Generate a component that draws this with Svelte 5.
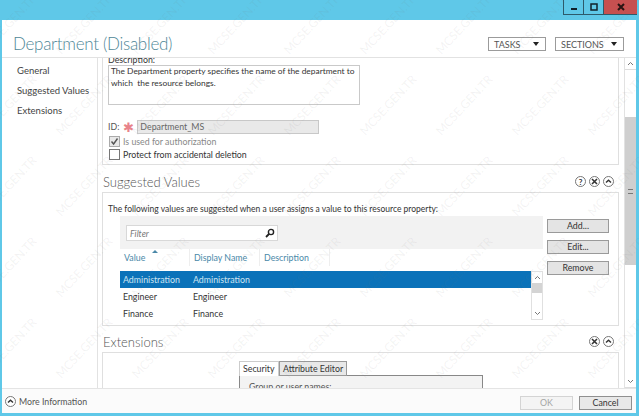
<script>
  const marks = [];
  for (let r = 0; r < 5; r++) {
    for (let c = -1; c < 8; c++) marks.push({ x: 84 + c * 76, y: 24 + r * 81 });
  }
  const rows = ['Administration', 'Engineer', 'Finance'];
</script>

<div class="window">
  <div class="titlebar">
    <div class="controls">
      <div class="ctl"><svg width="8" height="8" viewBox="0 0 8 8"><rect x="1" y="5" width="6" height="2" fill="#10212b" /></svg></div>
      <div class="ctl"><svg width="8" height="8" viewBox="0 0 8 8"><rect x="1" y="1" width="6" height="6" fill="none" stroke="#10212b" stroke-width="1.5" /></svg></div>
      <div class="ctl close"><svg width="8" height="8" viewBox="0 0 8 8"><path d="M1 1L7 7M7 1L1 7" stroke="#2a1413" stroke-width="2" /></svg></div>
    </div>
  </div>
  <div class="client">
    <header>
      <h1>Department (Disabled)</h1>
      <div class="menu tasks"><span>TASKS</span><i></i></div>
      <div class="menu sections"><span>SECTIONS</span><i></i></div>
    </header>
    <div class="body">
      <nav>
        <div>General</div>
        <div>Suggested Values</div>
        <div>Extensions</div>
      </nav>
      <main>
        <div class="scroll">
          <section class="panel general">
            <div class="desc-label">Description:</div>
            <div class="textarea">The Department property specifies the name of the department to which&nbsp; the resource belongs.</div>
            <div class="id-row">
              <span>ID:</span>
              <span class="star">✱</span>
              <div class="id-input">Department_MS</div>
            </div>
            <div class="check disabled"><span class="box"><svg width="9" height="9" viewBox="0 0 9 9"><path d="M1.5 4.5L3.6 7L7.5 1.5" fill="none" stroke="#555" stroke-width="1.4" /></svg></span>Is used for authorization</div>
            <div class="check"><span class="box"></span>Protect from accidental deletion</div>
          </section>

          <div class="sec-head">
            <h2>Suggested Values</h2>
            <span class="round help">?</span>
            <span class="round"><svg width="7" height="7" viewBox="0 0 7 7"><path d="M1 1L6 6M6 1L1 6" stroke="#333" stroke-width="1.6" /></svg></span>
            <span class="round"><svg width="7" height="7" viewBox="0 0 7 7"><path d="M1 4.6L3.5 2.2L6 4.6" fill="none" stroke="#333" stroke-width="1.4" /></svg></span>
          </div>
          <section class="panel values">
            <p>The following values are suggested when a user assigns a value to this resource property:</p>
            <div class="values-row">
              <div class="grid">
                <div class="filter-band">
                  <div class="filter">
                    <span>Filter</span>
                    <svg width="10" height="10" viewBox="0 0 10 10"><circle cx="6" cy="4" r="2.6" fill="none" stroke="#222" stroke-width="1.4" /><path d="M4 6L1 9" stroke="#222" stroke-width="1.8" /></svg>
                  </div>
                </div>
                <div class="columns">
                  <div class="col c1"><b class="sort"></b>Value</div>
                  <div class="col c2">Display Name</div>
                  <div class="col c3">Description</div>
                </div>
                <div class="list">
                  <div class="rows">
                    {#each rows as row, i}
                      <div class="row" class:selected={i === 0}><span class="c1">{row}</span><span>{row}</span></div>
                    {/each}
                  </div>
                  <div class="list-bar">
                    <span class="arrow"><svg width="7" height="5" viewBox="0 0 7 5"><path d="M1 4L3.5 1.5L6 4" fill="none" stroke="#777" /></svg></span>
                    <span class="list-thumb"></span>
                    <span class="grow"></span>
                    <span class="arrow"><svg width="7" height="5" viewBox="0 0 7 5"><path d="M1 1L3.5 3.5L6 1" fill="none" stroke="#777" /></svg></span>
                  </div>
                </div>
              </div>
              <div class="side">
                <div class="btn">Add...</div>
                <div class="btn">Edit...</div>
                <div class="btn">Remove</div>
              </div>
            </div>
          </section>

          <div class="sec-head ext">
            <h2>Extensions</h2>
            <span class="round"><svg width="7" height="7" viewBox="0 0 7 7"><path d="M1 1L6 6M6 1L1 6" stroke="#333" stroke-width="1.6" /></svg></span>
            <span class="round"><svg width="7" height="7" viewBox="0 0 7 7"><path d="M1 4.6L3.5 2.2L6 4.6" fill="none" stroke="#333" stroke-width="1.4" /></svg></span>
          </div>
          <section class="panel extensions">
            <div class="tabs">
              <div class="tab active">Security</div>
              <div class="tab">Attribute Editor</div>
            </div>
            <div class="tab-body">Group or user names:</div>
          </section>
        </div>
        <div class="scrollbar">
          <span class="sb-arrow"><svg width="7" height="5" viewBox="0 0 7 5"><path d="M1 4L3.5 1.5L6 4" fill="none" stroke="#777" /></svg></span>
          <span class="sb-space"></span>
          <span class="sb-thumb"><i></i></span>
          <span class="grow"></span>
          <span class="sb-arrow"><svg width="7" height="5" viewBox="0 0 7 5"><path d="M1 1L3.5 3.5L6 1" fill="none" stroke="#777" /></svg></span>
        </div>
      </main>
    </div>
    <footer>
      <span class="round"><svg width="7" height="7" viewBox="0 0 7 7"><path d="M1 4.6L3.5 2.2L6 4.6" fill="none" stroke="#333" stroke-width="1.4" /></svg></span>
      <span class="more">More Information</span>
      <div class="fbtn off">OK</div>
      <div class="fbtn">Cancel</div>
    </footer>
  </div>
  <div class="marks" aria-hidden="true">
    {#each marks as m}
      <span style="left:{m.x}px;top:{m.y}px">MCSE.GEN.TR</span>
    {/each}
  </div>
</div>

<style>
  :global(body) { margin: 0; background: #5fc8e8; }
  .window {
    position: relative;
    width: 639px;
    height: 416px;
    overflow: hidden;
    background: #5fc8e8;
    font-family: Lato, "Open Sans", sans-serif;
    font-size: 8.8px;
    color: #333;
    display: flex;
    flex-direction: column;
  }
  .titlebar { height: 20px; display: flex; justify-content: flex-end; padding-right: 2px; flex: none; }
  .controls { display: flex; height: 14px; border-bottom: 1px solid #2d5a6b; border-left: 1px solid #2d5a6b; }
  .ctl { width: 19px; display: flex; align-items: center; justify-content: center; border-right: 1px solid #2d5a6b; }
  .close { width: 33px; background: #c75050; border-right: 0; }
  .client {
    flex: 1;
    margin: 0 3px 3px 2px;
    background: #fff;
    display: flex;
    flex-direction: column;
    min-height: 0;
  }
  header {
    height: 38px;
    flex: none;
    box-sizing: border-box;
    border-bottom: 1px solid #e2e2e2;
    display: flex;
    align-items: flex-start;
    padding: 17px 12px 0 11px;
  }
  h1 {
    margin: -5px auto 0 0;
    font-size: 17px;
    letter-spacing: -0.3px;
    line-height: 24px;
    font-weight: 300;
    color: #4f8797;
  }
  .menu {
    height: 14px;
    box-sizing: border-box;
    border: 1px solid #9b9b9b;
    display: flex;
    align-items: center;
    justify-content: space-between;
    padding: 0 6px 0 5px;
    font-size: 9px;
    color: #555;
  }
  .menu i { width: 0; height: 0; border: 3.5px solid transparent; border-top: 4px solid #222; border-bottom: 0; }
  .tasks { width: 58px; margin-right: 9px; }
  .sections { width: 69px; }
  .body { flex: 1; display: flex; min-height: 0; }
  nav {
    width: 96px;
    flex: none;
    box-sizing: border-box;
    border-right: 1px solid #e2e2e2;
    padding: 3px 0 0 15px;
    font-size: 9.5px;
    line-height: 20px;
    color: #444;
  }
  main { flex: 1; display: flex; min-width: 0; min-height: 0; }
  .scroll { flex: 1; min-width: 0; overflow: hidden; padding: 0 5px 0 4px; }
  .panel { border: 1px solid #dfdfdf; box-sizing: border-box; }
  .general {
    height: 111px;
    margin-top: -4px;
    border-top: 0;
    padding: 0 0 0 5px;
    line-height: 12px;
  }
  .desc-label { height: 11px; }
  .textarea {
    width: 252px;
    height: 40px;
    box-sizing: border-box;
    border: 1px solid #c9c9c9;
    padding: 0 0 0 2px;
    line-height: 11.5px;
    font-size: 8.4px;
  }
  .id-row { display: flex; align-items: center; margin-top: 15px; height: 14px; color: #555; }
  .star { color: #e8838b; font-size: 13px; width: 14px; margin-left: 4px; }
  .id-input {
    width: 182px;
    height: 14px;
    box-sizing: border-box;
    border: 1px solid #c8c8c8;
    background: #e9e9e9;
    padding-left: 2px;
    line-height: 12px;
    color: #666;
  }
  .check { display: flex; align-items: center; height: 13px; gap: 3px; padding-left: 1px; }
  .id-row + .check { margin-top: 1px; }
  .check.disabled { color: #888; }
  .box {
    width: 9px;
    height: 9px;
    border: 1px solid #777;
    background: #fff;
    display: flex;
    align-items: center;
    justify-content: center;
  }
  .disabled .box { background: #e8e8e8; border-color: #aaa; }
  .sec-head { display: flex; align-items: center; gap: 3px; height: 27px; padding: 6px 5px 0 0; box-sizing: border-box; }
  .sec-head.ext { height: 26px; padding-top: 5px; }
  h2 {
    margin: 0 auto 0 0;
    font-size: 13px;
    font-weight: 300;
    color: #555;
    padding-left: 1px;
  }
  .round {
    width: 9px;
    height: 9px;
    border: 1px solid #777;
    border-radius: 50%;
    display: flex;
    align-items: center;
    justify-content: center;
    background: #fff;
    font-size: 8px;
    font-weight: 700;
    line-height: 1;
    flex: none;
  }
  .values { height: 134px; padding: 0 9px 0 5px; }
  .values p { margin: 10px 0 0; font-size: 8.5px; line-height: 12px; color: #333; height: 13px; }
  .values-row { display: flex; gap: 4px; padding-left: 12px; }
  .grid { width: 423px; flex: none; }
  .filter-band { height: 33px; background: #f2f2f2; padding: 9px 0 0 6px; box-sizing: border-box; }
  .filter {
    width: 152px;
    height: 16px;
    box-sizing: border-box;
    background: #fff;
    border: 1px solid #d8d8d8;
    display: flex;
    align-items: center;
    justify-content: space-between;
    padding: 0 2px 0 3px;
    font-style: italic;
    color: #777;
  }
  .columns { height: 22px; display: flex; color: #4a88a8; }
  .col { position: relative; height: 17px; line-height: 17px; box-sizing: border-box; border-right: 1px solid #eee; padding-left: 4px; }
  .col.c1, .col.c2, .col.c3 { width: 70px; }
  .sort { position: absolute; left: 32px; top: 1px; width: 0; height: 0; border: 3px solid transparent; border-bottom: 3px solid #4a88a8; border-top: 0; }
  .list { display: flex; height: 49px; }
  .rows { flex: 1; }
  .row { height: 17px; display: flex; align-items: center; padding-left: 3px; color: #333; }
  .row .c1 { width: 70px; }
  .row.selected { background: #0b72b9; color: #cfe6f3; }
  .list-bar { width: 12px; box-sizing: border-box; border: 1px solid #e0e0e0; display: flex; flex-direction: column; }
  .arrow { height: 11px; display: flex; align-items: center; justify-content: center; flex: none; }
  .list-thumb { height: 10px; background: #d4d4d4; flex: none; }
  .grow { flex: 1; }
  .side { display: flex; flex-direction: column; gap: 7px; padding-top: 3px; }
  .btn {
    width: 62px;
    height: 14px;
    box-sizing: border-box;
    border: 1px solid #9a9a9a;
    background: #e4e4e4;
    text-align: center;
    line-height: 12px;
  }
  .extensions { height: 60px; padding: 8px 0 0 136px; border-bottom: 0; }
  .tabs { display: flex; height: 15px; }
  .tab {
    box-sizing: border-box;
    border: 1px solid #999;
    background: #e8e8e8;
    padding: 0 3px;
    line-height: 13px;
  }
  .tab.active { width: 40px; background: #fff; border-bottom: 0; border-color: #ccc; }
  .tab-body {
    width: 244px;
    box-sizing: border-box;
    height: 40px;
    border: 1px solid #888;
    border-bottom: 0;
    background: #f3f3f3;
    padding: 5px 0 0 9px;
    margin-top: -1px;
    color: #555;
  }
  .scrollbar {
    width: 12px;
    flex: none;
    box-sizing: border-box;
    border-left: 1px solid #e2e2e2;
    display: flex;
    flex-direction: column;
  }
  .sb-arrow { height: 11px; display: flex; align-items: center; justify-content: center; flex: none; border-bottom: 1px solid #ddd; }
  .sb-space { height: 47px; flex: none; }
  .sb-thumb { height: 148px; flex: none; background: #cfcfcf; display: flex; align-items: center; justify-content: center; }
  .sb-thumb i { width: 5px; height: 5px; border-top: 1px solid #777; border-bottom: 1px solid #777; box-sizing: border-box; }
  footer {
    height: 25px;
    flex: none;
    box-sizing: border-box;
    border-top: 1px solid #e4e4e4;
    background: #fbfbfb;
    display: flex;
    align-items: center;
    padding: 0 4px 0 3px;
    color: #555;
  }
  .more { margin-left: 3px; margin-right: auto; }
  .fbtn {
    width: 53px;
    height: 14px;
    box-sizing: border-box;
    border: 1px solid #8f8f8f;
    background: #e8e8e8;
    text-align: center;
    line-height: 12px;
    margin: 3px 0 0 6px;
    color: #333;
  }
  .fbtn.off { border-color: #d4d4d4; background: #f4f4f4; color: #a5a5a5; }
  .marks { position: absolute; inset: 0; pointer-events: none; }
  .marks span {
    position: absolute;
    transform: translate(-50%, -50%) rotate(-47deg);
    font-size: 12px;
    color: rgba(120, 120, 120, 0.09);
    white-space: nowrap;
  }
</style>
